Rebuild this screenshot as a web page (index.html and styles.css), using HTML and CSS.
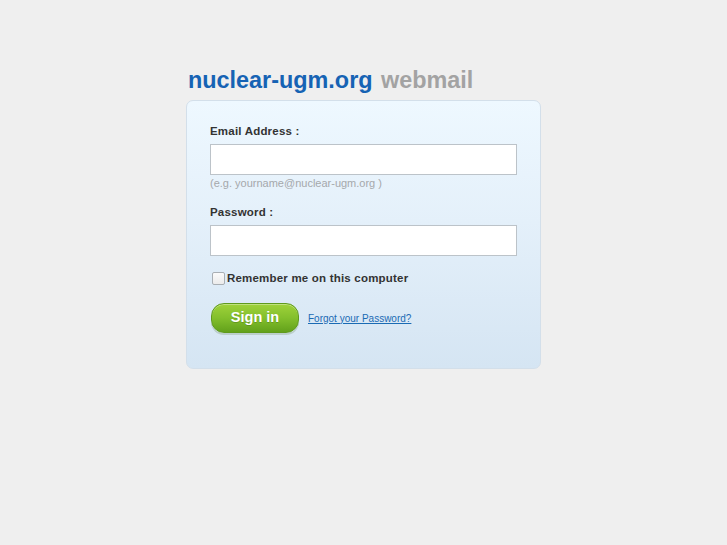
FILE: index.html
```html
<!DOCTYPE html>
<html>
<head>
<meta charset="utf-8">
<link rel="stylesheet" href="styles.css">
</head>
<body>
<div class="wrap">
  <h1 class="title"><span class="domain">nuclear-ugm.org</span> <span class="webmail">webmail</span></h1>
  <form class="card">
    <label class="label">Email Address :</label>
    <input class="field" type="text">
    <div class="hint">(e.g. yourname@nuclear-ugm.org )</div>
    <label class="label label-pw">Password :</label>
    <input class="field" type="password">
    <div class="remember"><span class="check"></span><span>Remember me on this computer</span></div>
    <div class="actions">
      <button class="signin" type="button">Sign in</button>
      <a class="forgot" href="#">Forgot your Password?</a>
    </div>
  </form>
</div>
</body>
</html>
```
FILE: styles.css
```css
html, body { margin: 0; padding: 0; }
body {
  background: #efefef;
  font-family: "Liberation Sans", Arial, sans-serif;
  color: #333;
}
.wrap {
  width: 355px;
  margin: 0 0 0 186px;
  padding-top: 66px;
}
.title {
  margin: 0 0 5px 2px;
  font-size: 23.4px;
  line-height: 29px;
  font-weight: bold;
  white-space: nowrap;
}
.domain { color: #1663b4; }
.webmail { color: #a3a3a3; margin-left: 2px; }
.card {
  display: flex;
  flex-direction: column;
  align-items: flex-start;
  box-sizing: border-box;
  height: 269px;
  border: 1px solid #d3dfea;
  border-radius: 7px;
  background: linear-gradient(#eef8ff 0%, #e4f0fa 45%, #d5e5f3 100%);
  padding: 23px 22px 0 23px;
}
.label {
  display: block;
  font-size: 11.5px;
  line-height: 14px;
  font-weight: bold;
  color: #333;
  letter-spacing: 0.2px;
}
.field {
  display: block;
  box-sizing: border-box;
  width: 307px;
  height: 31px;
  margin: 6px 0 0 0;
  border: 1px solid #bcc3c9;
  background: #fff;
  padding: 0;
}
.hint {
  margin-top: 1px;
  font-size: 11px;
  line-height: 14px;
  color: #a5a8ab;
}
.label-pw { margin-top: 15px; }
.remember {
  display: flex;
  align-items: center;
  margin-top: 15px;
  margin-left: 2px;
  font-size: 11.5px;
  font-weight: bold;
  line-height: 14px;
  color: #333;
  letter-spacing: 0.2px;
}
.check {
  box-sizing: border-box;
  width: 13px;
  height: 13px;
  margin-right: 2px;
  border: 1px solid #a9afb4;
  border-radius: 2px;
  background: linear-gradient(#fbfbfb, #ebebeb);
}
.actions {
  display: flex;
  align-items: center;
  margin-top: 18px;
  margin-left: 1px;
}
.signin {
  width: 88px;
  height: 30px;
  border: 1px solid #5f9a1c;
  border-radius: 13px;
  background: linear-gradient(#9fd23a 0%, #83bf2c 50%, #62a11b 100%);
  box-shadow: 0 2px 0 rgba(100, 130, 80, 0.25), inset 0 1px 0 rgba(255,255,255,0.35);
  color: #fff;
  font-family: "Liberation Sans", Arial, sans-serif;
  font-size: 14.5px;
  font-weight: bold;
  padding: 0 0 2px 0;
  text-shadow: 0 1px 0 rgba(60, 100, 20, 0.35);
}
.forgot {
  margin-left: 9px;
  font-size: 10px;
  color: #1a6bb4;
  text-decoration: underline;
}
```
